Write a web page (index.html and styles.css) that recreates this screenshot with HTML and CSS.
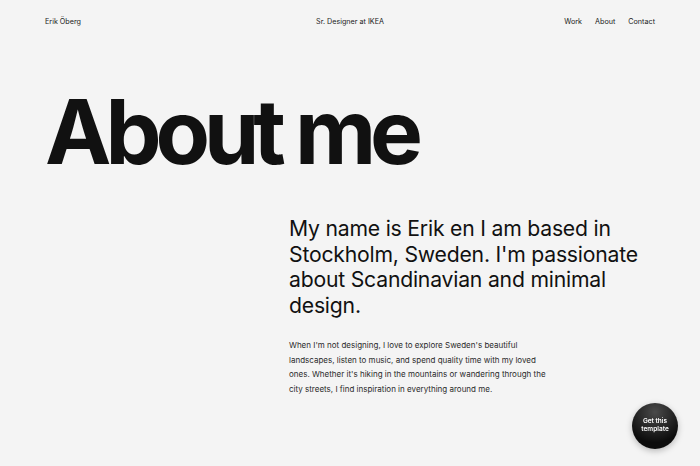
FILE: index.html
```html
<!DOCTYPE html>
<html lang="en">
<head>
  <meta charset="UTF-8">
  <title>Erik Öberg — About</title>
  <meta name="viewport" content="width=device-width, initial-scale=1.0">
  <link rel="stylesheet" href="styles.css">
</head>
<body>
  <div class="page">
    <header class="topbar">
      <a class="brand" href="#">Erik Öberg</a>
      <span class="role">Sr. Designer at IKEA</span>
      <nav class="nav">
        <a href="#">Work</a>
        <a href="#">About</a>
        <a href="#">Contact</a>
      </nav>
    </header>

    <h1 class="title">About me</h1>

    <section class="about">
      <div></div>
      <div class="about-text">
        <p class="lead">My name is Erik en I am based in Stockholm, Sweden. I'm passionate about Scandinavian and minimal design.</p>
        <p class="body">When I'm not designing, I love to explore Sweden's beautiful landscapes, listen to music, and spend quality time with my loved ones. Whether it's hiking in the mountains or wandering through the city streets, I find inspiration in everything around me.</p>
      </div>
    </section>
  </div>

  <a class="template-btn" href="#">Get this<br>template</a>
</body>
</html>
```

FILE: styles.css
```css
:root {
  --bg: #f4f4f4;
  --text: #111111;
  --muted: #2a2a2a;
}

* {
  box-sizing: border-box;
}

body {
  margin: 0;
  background: var(--bg);
  color: var(--text);
  font-family: Inter, 'Noto Sans', sans-serif;
}

a {
  color: inherit;
  text-decoration: none;
}

.page {
  padding: 0 45px;
}

.topbar {
  display: grid;
  grid-template-columns: 1fr auto 1fr;
  align-items: center;
  height: 43px;
  font-size: 7.2px;
  color: #222;
}

.role {
  text-align: center;
}

.nav {
  display: flex;
  justify-content: flex-end;
  gap: 13px;
}

.title {
  margin: 44px 0 0 0;
  font-size: 89px;
  font-weight: 700;
  letter-spacing: -0.068em;
  line-height: 1;
}

.about {
  display: grid;
  grid-template-columns: 244px 1fr;
  margin-top: 40px;
}

.lead {
  margin: 0;
  max-width: 360px;
  font-size: 21.2px;
  line-height: 25.7px;
  letter-spacing: -0.01em;
}

.body {
  margin: 19px 0 0;
  max-width: 264px;
  font-size: 8px;
  line-height: 14.8px;
  color: var(--muted);
}

.template-btn {
  position: fixed;
  right: 22px;
  bottom: 17px;
  width: 46px;
  height: 46px;
  border-radius: 50%;
  background: radial-gradient(circle at 50% 20%, #4a4a4a, #0c0c0c 70%);
  color: #fff;
  font-size: 6.5px;
  font-weight: 600;
  line-height: 1.2;
  text-align: center;
  display: flex;
  align-items: center;
  justify-content: center;
  box-shadow: 0 2px 6px rgba(0,0,0,0.25);
}
```
